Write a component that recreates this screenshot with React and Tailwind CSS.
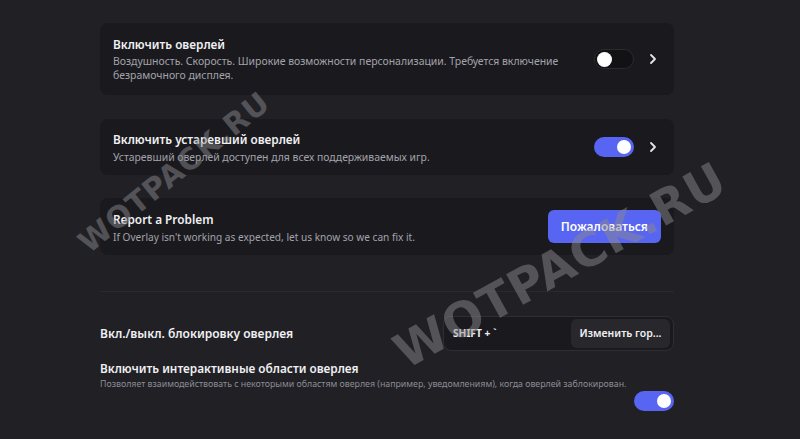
import React from "react";

function Toggle({ on }) {
  return on ? (
    <div className="w-[40px] h-[20px] rounded-full bg-[#5865f2] flex items-center justify-end pr-[3px] shrink-0">
      <div className="w-[14px] h-[14px] rounded-full bg-white" />
    </div>
  ) : (
    <div className="w-[40px] h-[20px] rounded-full bg-[#121215] border border-[#2a2a30] flex items-center pl-[2px] shrink-0">
      <div className="w-[15px] h-[15px] rounded-full bg-white" />
    </div>
  );
}

function Chevron() {
  return (
    <svg width="10" height="12" viewBox="0 0 10 12" className="shrink-0">
      <path d="M3 2l4 4-4 4" stroke="#e6e6ea" strokeWidth="1.8" fill="none" strokeLinecap="round" strokeLinejoin="round" />
    </svg>
  );
}

export default function App() {
  const font = { fontFamily: '"Noto Sans", "Open Sans", sans-serif' };
  return (
    <div className="relative w-[800px] h-[439px] overflow-hidden bg-[#202025]" style={font}>
      <div className="ml-[100px] w-[574px] pt-[23px] flex flex-col">
        {/* Card 1 */}
        <div className="h-[72px] rounded-lg bg-[#1a1a1e] pl-[13px] pr-[16px] flex items-center">
          <div className="flex-1 min-w-0">
            <div className="text-[11.8px] font-semibold text-[#f0f0f3] leading-[17px]">Включить оверлей</div>
            <div className="text-[10.45px] text-[#a3a3ab] leading-[14px] mt-[1px] w-[462px]">
              Воздушность. Скорость. Широкие возможности персонализации. Требуется включение безрамочного дисплея.
            </div>
          </div>
          <div className="flex items-center gap-[14px] ml-[4px]">
            <Toggle on={false} />
            <Chevron />
          </div>
        </div>

        {/* Card 2 */}
        <div className="mt-[24px] h-[56px] rounded-lg bg-[#1a1a1e] pl-[13px] pr-[16px] flex items-center">
          <div className="flex-1 min-w-0">
            <div className="text-[11.8px] font-semibold text-[#f0f0f3] leading-[17px]">Включить устаревший оверлей</div>
            <div className="text-[10.4px] text-[#a3a3ab] leading-[14px] mt-[2px]">
              Устаревший оверлей доступен для всех поддерживаемых игр.
            </div>
          </div>
          <div className="flex items-center gap-[14px]">
            <Toggle on />
            <Chevron />
          </div>
        </div>

        {/* Card 3 */}
        <div className="mt-[23px] h-[57px] rounded-lg bg-[#1a1a1e] pl-[13px] pr-[13px] flex items-center">
          <div className="flex-1 min-w-0 pt-[2px]">
            <div className="text-[11.8px] font-semibold text-[#f0f0f3] leading-[17px]">Report a Problem</div>
            <div className="text-[10.1px] text-[#a3a3ab] leading-[14px] mt-[2px]">
              If Overlay isn't working as expected, let us know so we can fix it.
            </div>
          </div>
          <button className="h-[33px] px-[13px] rounded-md bg-[#5865f2] text-white text-[12px] font-semibold">
            Пожаловаться
          </button>
        </div>

        <div className="mt-[36px] h-px bg-[#29292f]" />

        {/* Keybind row */}
        <div className="mt-[24px] flex items-center justify-between">
          <div className="text-[12px] font-semibold text-[#f0f0f3]">Вкл./выкл. блокировку оверлея</div>
          <div className="w-[231px] h-[35px] rounded-lg border border-[#2e2e35] bg-[#1a1a1e] flex items-center pl-[9px] pr-[3px]">
            <div className="flex-1 text-[10.2px] font-bold text-[#f0f0f3]">SHIFT + `</div>
            <div className="h-[29px] w-[99px] rounded-md bg-[#27272c] flex items-center justify-center text-[10.5px] font-semibold text-[#f0f0f3]">
              Изменить гор...
            </div>
          </div>
        </div>

        {/* Interactive */}
        <div className="mt-[8px]">
          <div className="text-[11.8px] font-semibold text-[#f0f0f3] leading-[18px]">Включить интерактивные области оверлея</div>
          <div className="text-[8.8px] text-[#8d8d95] leading-[14px] whitespace-nowrap">
            Позволяет взаимодействовать с некоторыми областям оверлея (например, уведомлениям), когда оверлей заблокирован.
          </div>
          <div className="flex justify-end">
            <Toggle on />
          </div>
        </div>
      </div>

      {/* Watermarks */}
      <div
        className="absolute left-[174px] top-[172px] -translate-x-1/2 -translate-y-1/2 rotate-[-39deg] whitespace-nowrap text-[30px] font-bold tracking-[1px] text-[rgba(135,135,140,0.5)] pointer-events-none"
        style={{ fontFamily: '"DejaVu Sans", sans-serif' }}
      >
        WOTPACK.RU
      </div>
      <div
        className="absolute left-[560px] top-[265px] -translate-x-1/2 -translate-y-1/2 rotate-[-29deg] whitespace-nowrap text-[48px] font-bold tracking-[1px] text-[rgba(135,135,140,0.5)] pointer-events-none"
        style={{ fontFamily: '"DejaVu Sans", sans-serif' }}
      >
        WOTPACK.RU
      </div>
    </div>
  );
}
